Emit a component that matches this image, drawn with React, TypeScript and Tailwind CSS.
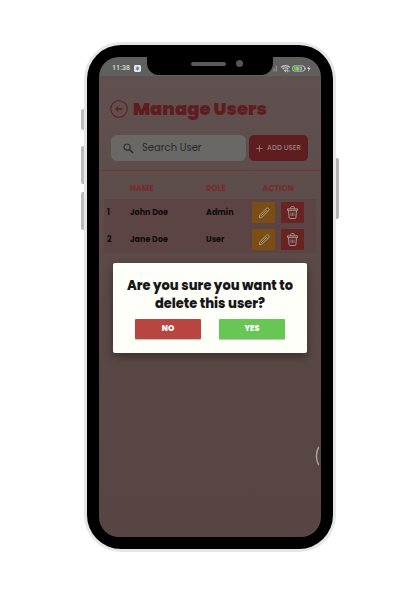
import React from "react";

type User = { id: number; name: string; role: string };

const users: User[] = [
  { id: 1, name: "John Doe", role: "Admin" },
  { id: 2, name: "Jane Doe", role: "User" },
];

function StatusBar() {
  return (
    <div className="flex h-[19px] items-center justify-between bg-[#5f605e] pt-[3px] pr-[10px] pl-[13px] text-[#d8d8d6]">
      <div className="flex items-center gap-1">
        <span className="font-['Roboto',sans-serif] text-[7px] leading-[10px] font-semibold">11:38</span>
        <svg className="h-[7px] w-[7px]" viewBox="0 0 7 7" aria-hidden="true">
          <rect width="7" height="7" rx="1.4" fill="#e4e6ea" />
          <path d="M3.5 1.6v3.8M1.9 2.6l3.2 1.8M5.1 2.6L1.9 4.4" stroke="#5578b0" strokeWidth="1" />
        </svg>
      </div>
      <svg className="h-[9px] w-[38px]" viewBox="0 0 38 9" aria-hidden="true">
        <path d="M1 7.5v-3M3.3 7.5V1.7" stroke="#8b8c8a" strokeWidth="1.4" />
        <path d="M8 3.3a6.4 6.4 0 0 1 8.8 0M9.6 5a4 4 0 0 1 5.6 0" fill="none" stroke="#c9c9c7" strokeWidth="1.2" />
        <path d="M10.8 6.2a2.4 2.4 0 0 1 3.2 0l-1.6 2z" fill="#c9c9c7" />
        <path d="M14.5 5.2v3M16 6v2" stroke="#c9c9c7" strokeWidth="0.7" />
        <rect x="19.7" y="1.9" width="11.8" height="5.2" rx="1.6" fill="none" stroke="#c9c9c7" strokeWidth="0.9" />
        <rect x="20.7" y="2.8" width="5" height="3.5" rx="0.6" fill="#56cf2e" />
        <path d="M25.4 3.3h-1.4v1.2h1.2v1.3h-1.4M27 3.3h1.6v2.5H27z" fill="none" stroke="#dededc" strokeWidth="0.6" />
        <path d="M32.5 3.6v1.8" stroke="#c9c9c7" strokeWidth="0.8" />
        <path d="M36.7 1.5L34.2 5h1.4l-.6 2.7L37.6 4h-1.4z" fill="#d2d2d0" />
      </svg>
    </div>
  );
}

function Notch() {
  return (
    <div className="absolute inset-x-0 top-0 flex justify-center" aria-hidden="true">
      <div className="flex h-[18px] w-[126px] items-start rounded-b-[12px] bg-black pt-[3px] pl-11">
        <span className="mt-[2px] h-1 w-[35px] rounded-full bg-[#5a5a5a]" />
        <span className="ml-[10px] h-[7px] w-[7px] rounded-full bg-[#565656]" />
      </div>
    </div>
  );
}

function BackIcon() {
  return (
    <svg className="h-[18px] w-[18px]" viewBox="0 0 18 18" fill="none" stroke="currentColor" aria-hidden="true">
      <circle cx="9" cy="9" r="8.2" strokeWidth="1.1" />
      <path d="M12.6 9H5.9M8.2 6.6L5.8 9l2.4 2.4" strokeWidth="1.3" />
    </svg>
  );
}

function SearchIcon() {
  return (
    <svg className="h-[11px] w-[11px] shrink-0" viewBox="0 0 11 11" fill="none" stroke="#2f2c2b" aria-hidden="true">
      <circle cx="4.1" cy="4.1" r="3.1" strokeWidth="1.2" />
      <path d="M6.3 6.3l3.8 3.8" strokeWidth="1.5" />
    </svg>
  );
}

function PencilIcon() {
  return (
    <svg className="h-3 w-3" viewBox="0 0 12 12" fill="none" stroke="#a9a08f" strokeWidth="0.9" strokeLinejoin="round" aria-hidden="true">
      <path d="M1.2 10.8l.7-3L8.3 1.4a1.5 1.5 0 0 1 2.3 2.3L4.2 10.1zM7.4 2.3l2.3 2.3M8.4 3.6L3.2 8.8" />
    </svg>
  );
}

function TrashIcon() {
  return (
    <svg className="h-[13px] w-[11px]" viewBox="0 0 11 13" fill="none" stroke="#a59594" strokeWidth="1" strokeLinejoin="round" aria-hidden="true">
      <path d="M.5 2.8h10v1.6H.5zM3.7 2.8V1.4c0-.5.3-.8.8-.8h2c.5 0 .8.3.8.8v1.4M1.5 4.4l.6 7.1c0 .6.4 1 1 1h4.8c.6 0 1-.4 1-1l.6-7.1" />
      <path d="M4 6.6v3.4M5.5 6.6v3.4M7 6.6v3.4" strokeWidth="0.7" />
    </svg>
  );
}

function UserTable() {
  return (
    <table className="w-full table-fixed border-collapse text-left text-[8px] leading-[10px]">
      <colgroup>
        <col className="w-[26px]" />
        <col className="w-[76px]" />
        <col className="w-[34px]" />
        <col />
      </colgroup>
      <thead>
        <tr className="h-[28px] text-[#7a2a2e]">
          <td />
          <th scope="col" className="pt-[7px] font-bold">NAME</th>
          <th scope="col" className="pt-[7px] font-bold">ROLE</th>
          <th scope="col" className="pt-[7px] text-center font-bold">ACTION</th>
        </tr>
      </thead>
      <tbody className="bg-[#5c4344] font-bold text-[#120d0d]">
        {users.map((user) => (
          <tr key={user.id} className="h-[27px]">
            <td className="pl-[3px]">{user.id}</td>
            <td>{user.name}</td>
            <td>{user.role}</td>
            <td>
              <div className="flex justify-center gap-[6px]">
                <button aria-label={`Edit ${user.name}`} className="flex h-[21px] w-[23px] items-center justify-center rounded-[1px] bg-[#7a4e14]">
                  <PencilIcon />
                </button>
                <button aria-label={`Delete ${user.name}`} className="flex h-[21px] w-[23px] items-center justify-center rounded-[1px] bg-[#682323]">
                  <TrashIcon />
                </button>
              </div>
            </td>
          </tr>
        ))}
      </tbody>
    </table>
  );
}

function ConfirmDialog() {
  return (
    <div className="absolute inset-0 flex items-center justify-center px-[14px] pt-[2px]">
      <div
        role="alertdialog"
        aria-labelledby="confirm-title"
        className="w-full rounded-[2px] bg-[#fffffa] px-2 pt-[14px] pb-[14px] text-center shadow-[0_4px_10px_rgba(0,0,0,0.35)]"
      >
        <h2 id="confirm-title" className="text-[13px] leading-[18px] font-extrabold text-[#171717]">
          Are you sure you want to delete this user?
        </h2>
        <div className="mt-[6px] flex justify-center gap-[18px] text-[8px] leading-[10px] font-extrabold text-white">
          <button className="h-5 w-[66px] rounded-[1px] bg-[#b94541] shadow-[0_1px_1px_rgba(0,0,0,0.25)]">NO</button>
          <button className="h-5 w-[66px] rounded-[1px] bg-[#68c655] shadow-[0_1px_1px_rgba(0,0,0,0.25)]">YES</button>
        </div>
      </div>
    </div>
  );
}

function ManageUsers() {
  return (
    <div className="relative flex grow flex-col bg-linear-to-b from-[#605150] via-[#594846] to-[#574543]">
      <header className="flex items-center gap-[5px] pt-[21px] pl-[11px] text-[#601d20]">
        <button aria-label="Back">
          <BackIcon />
        </button>
        <h1 className="text-[18px] leading-6 font-black">Manage Users</h1>
      </header>
      <div className="flex gap-[3px] border-b border-[#74343a] pt-[14px] pr-[13px] pb-[9px] pl-3">
        <label className="flex h-[26px] min-w-0 grow items-center gap-2 rounded-[6px] bg-[#6a6866] pl-3">
          <SearchIcon />
          <input
            type="search"
            aria-label="Search User"
            placeholder="Search User"
            className="h-5 w-full min-w-0 bg-transparent text-[10px] leading-5 text-[#2c2a29] outline-none placeholder:text-[#2c2a29]"
          />
        </label>
        <button className="flex h-[26px] w-[59px] shrink-0 items-center justify-center gap-1 rounded-[5px] bg-[#5e1e21] text-[7px] leading-2 font-medium whitespace-nowrap text-[#9a8080]">
          <svg className="h-[7px] w-[7px] shrink-0" viewBox="0 0 7 7" stroke="currentColor" aria-hidden="true">
            <path d="M3.5 .3v6.4M.3 3.5h6.4" strokeWidth="0.9" />
          </svg>
          ADD USER
        </button>
      </div>
      <div className="px-[5px]">
        <UserTable />
      </div>
      <svg className="absolute right-[1px] bottom-[71px] h-5 w-[5px]" viewBox="0 0 5 20" fill="none" stroke="#aaa3a2" strokeWidth="1.4" aria-hidden="true">
        <path d="M3.8 1C.6 6 .6 14 3.8 19" />
      </svg>
      <ConfirmDialog />
    </div>
  );
}

export default function App() {
  return (
    <main className="flex min-h-screen items-center justify-center bg-white font-['Poppins','Inter',sans-serif]">
      <div className="relative">
        <div aria-hidden="true">
          <span className="absolute top-[67px] -left-[3px] h-[21px] w-[3px] rounded-l-[2px] bg-[#bcbcbc]" />
          <span className="absolute top-[104px] -left-[3px] h-[38px] w-[3px] rounded-l-[2px] bg-[#bcbcbc]" />
          <span className="absolute top-[150px] -left-[3px] h-[38px] w-[3px] rounded-l-[2px] bg-[#bcbcbc]" />
          <span className="absolute top-[116px] -right-[3px] h-[61px] w-[3px] rounded-r-[2px] bg-[#b4b4b4]" />
        </div>
        <div className="rounded-[37px] bg-[#e6e6e6] p-[3px]">
          <div className="rounded-[34px] bg-black p-3">
            <div className="relative flex min-h-[480px] w-[222px] flex-col overflow-hidden rounded-[20px]">
              <StatusBar />
              <ManageUsers />
              <Notch />
            </div>
          </div>
        </div>
      </div>
    </main>
  );
}
